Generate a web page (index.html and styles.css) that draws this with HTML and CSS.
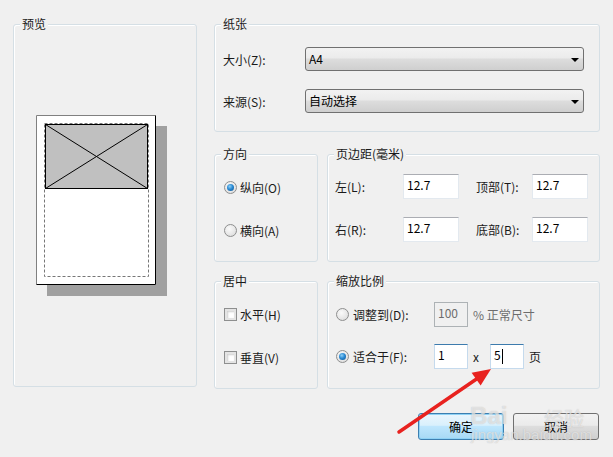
FILE: index.html
```html
<!DOCTYPE html>
<html lang="zh-CN">
<head>
<meta charset="utf-8">
<title>页面设置</title>
<link rel="stylesheet" href="styles.css">
</head>
<body>
<div class="dialog">
  <div class="top">
    <div class="group preview">
      <span class="legend">预览</span>
      <svg class="page" width="132" height="182" viewBox="0 0 132 182">
        <rect x="11" y="11" width="120" height="170" fill="#a0a0a0"/>
        <rect x="0" y="0" width="120" height="170" fill="#fff"/>
        <path d="M0.5 169.5 V0.5 H119.5" fill="none" stroke="#808080"/>
        <path d="M119.5 0.5 V169.5 H0.5" fill="none" stroke="#000"/>
        <rect x="8.5" y="8.5" width="104" height="153" fill="none" stroke="#777" stroke-dasharray="3 2"/>
        <rect x="9.5" y="9.5" width="102" height="64" fill="#c0c0c0" stroke="#000"/>
        <path d="M9.5 9.5 L111.5 73.5 M111.5 9.5 L9.5 73.5" stroke="#000" stroke-width="1"/>
      </svg>
    </div>
    <div class="right">
      <div class="group paper">
        <span class="legend">纸张</span>
        <div class="prow"><span class="plabel">大小(Z):</span><div class="combo">A4<i class="arrow"></i></div></div>
        <div class="prow"><span class="plabel">来源(S):</span><div class="combo">自动选择<i class="arrow"></i></div></div>
      </div>
      <div class="row row1">
        <div class="group small">
          <span class="legend">方向</span>
          <div class="opt"><span class="radio checked"></span>纵向(O)</div>
          <div class="opt"><span class="radio"></span>横向(A)</div>
        </div>
        <div class="group wide margins">
          <span class="legend">页边距(毫米)</span>
          <span class="mlabel">左(L):</span><div class="input">12.7</div><span></span><span class="mlabel">顶部(T):</span><div class="input">12.7</div>
          <span class="mlabel">右(R):</span><div class="input">12.7</div><span></span><span class="mlabel">底部(B):</span><div class="input">12.7</div>
        </div>
      </div>
      <div class="row row2">
        <div class="group small">
          <span class="legend">居中</span>
          <div class="opt"><span class="check"></span>水平(H)</div>
          <div class="opt"><span class="check"></span>垂直(V)</div>
        </div>
        <div class="group wide scale">
          <span class="legend">缩放比例</span>
          <div class="srow">
            <div class="sopt"><span class="radio"></span>调整到(D):</div>
            <div class="input num disabled">100</div>
            <span class="gray">% 正常尺寸</span>
          </div>
          <div class="srow">
            <div class="sopt"><span class="radio checked"></span>适合于(F):</div>
            <div class="input num focus">1</div>
            <span class="times">x</span>
            <div class="input num focus">5<i class="caret"></i></div>
            <span class="pg">页</span>
          </div>
        </div>
      </div>
    </div>
  </div>
  <div class="buttons">
    <button class="btn default">确定</button>
    <button class="btn">取消</button>
  </div>
</div>
<div class="watermark">
  <span class="wm-big">Bai</span><span class="wm-cn">经验</span>
  <span class="wm-url">jingyan.baidu.com</span>
</div>
<svg class="annot" width="613" height="457" viewBox="0 0 613 457">
  <line x1="399" y1="432" x2="478" y2="378" stroke="#e8221f" stroke-width="3.5" stroke-linecap="round"/>
  <polygon points="491,369 480.6,385.6 471.6,372.8" fill="#e8221f"/>
</svg>
</body>
</html>
```

FILE: styles.css
```css
html, body {
  margin: 0;
  padding: 0;
}
body {
  width: 613px;
  height: 457px;
  background: #f0f0f0;
  font-family: "Noto Sans CJK SC", "Open Sans", sans-serif;
  font-size: 12px;
  color: #1a1a1a;
  position: relative;
  overflow: hidden;
}
.dialog {
  padding: 24px 14px 0 13px;
}
.top {
  display: grid;
  grid-template-columns: 184px 386px;
  column-gap: 17px;
}
.group {
  position: relative;
  border: 1px solid #d5dfe5;
  border-radius: 3px;
  box-shadow: inset 1px 1px 0 #fff;
  box-sizing: border-box;
}
.legend {
  position: absolute;
  top: -10px;
  left: 6px;
  padding: 0 2px;
  background: #f0f0f0;
  line-height: 18px;
}
.preview {
  height: 363px;
}
.page {
  display: block;
  margin: 90px 0 0 22px;
}
.right {
  display: flex;
  flex-direction: column;
}
.paper {
  height: 108px;
  padding: 22px 15px 0 8px;
  display: flex;
  flex-direction: column;
  gap: 18px;
}
.prow {
  display: flex;
  align-items: center;
  height: 24px;
}
.plabel {
  width: 82px;
}
.combo {
  flex: 1;
  height: 24px;
  box-sizing: border-box;
  border: 1px solid #707070;
  border-radius: 3px;
  background: linear-gradient(#f2f2f2 0%, #ebebeb 45%, #dddddd 50%, #cfcfcf 100%);
  padding-left: 3px;
  line-height: 21px;
  position: relative;
  color: #000;
}
.arrow {
  position: absolute;
  right: 4px;
  top: 10px;
  width: 0;
  height: 0;
  border-left: 4px solid transparent;
  border-right: 4px solid transparent;
  border-top: 4px solid #000;
}
.row {
  display: flex;
  gap: 9px;
  height: 108px;
}
.row1 { margin-top: 22px; }
.row2 { margin-top: 19px; }
.small {
  width: 104px;
  padding: 22px 0 0 9px;
  display: flex;
  flex-direction: column;
  gap: 23px;
}
.wide {
  flex: 1;
}
.opt {
  display: flex;
  align-items: center;
  height: 20px;
}
.radio {
  width: 13px;
  height: 13px;
  box-sizing: border-box;
  border: 1px solid #8e8f8f;
  border-radius: 50%;
  background: radial-gradient(circle at 40% 35%, #fafafa 0%, #e6e6e6 60%, #d4d4d4 100%);
  margin-right: 3px;
  position: relative;
  flex: none;
}
.radio.checked::after {
  content: "";
  position: absolute;
  left: 2px;
  top: 2px;
  width: 7px;
  height: 7px;
  border-radius: 50%;
  background: radial-gradient(circle at 40% 35%, #8fd0f5 0%, #2a8ad4 45%, #0d4f8a 100%);
}
.check {
  width: 13px;
  height: 13px;
  box-sizing: border-box;
  border: 1px solid #8e8f8f;
  background: #fff;
  box-shadow: inset 0 0 0 2px #e4e4e4, inset 1px 1px 2px 2px #cfcfcf;
  margin-right: 3px;
  flex: none;
}
.margins {
  padding: 19px 0 0 7px;
  display: grid;
  grid-template-columns: 68px 56px 17px 56px 56px;
  grid-template-rows: 25px 25px;
  row-gap: 18px;
  align-content: start;
  align-items: center;
}
.input {
  height: 25px;
  box-sizing: border-box;
  border: 1px solid #e3e9ef;
  border-top-color: #abadb3;
  background: #fff;
  padding: 0 0 0 3px;
  line-height: 20px;
  color: #000;
  position: relative;
}
.scale {
  padding: 20px 0 0 8px;
  display: flex;
  flex-direction: column;
  gap: 17px;
}
.srow {
  display: flex;
  align-items: center;
  height: 25px;
}
.sopt {
  display: flex;
  align-items: center;
  width: 98px;
}
.sopt .radio {
  margin-right: 4px;
}
.num {
  width: 34px;
}
.disabled {
  background: #f0f0f0;
  border-color: #adb2b5;
  color: #6d6d6d;
}
.focus {
  border-color: #c5daed;
  border-top-color: #3d7bad;
}
.gray {
  color: #6d6d6d;
  margin-left: 5px;
}
.times {
  width: 22px;
  padding-left: 5px;
  box-sizing: border-box;
}
.caret {
  position: absolute;
  left: 11px;
  top: 4px;
  width: 1px;
  height: 15px;
  background: #000;
}
.pg {
  margin-left: 5px;
}
.buttons {
  display: flex;
  justify-content: flex-end;
  gap: 9px;
  margin-top: 24px;
}
.btn {
  width: 86px;
  height: 27px;
  box-sizing: border-box;
  border: 1px solid #707070;
  border-radius: 3px;
  background: linear-gradient(#f2f2f2 0%, #ebebeb 45%, #dddddd 50%, #cfcfcf 100%);
  font-family: inherit;
  font-size: 12px;
  color: #000;
  padding: 0;
}
.btn.default {
  border-color: #3c7fb1;
  background: linear-gradient(#eaf6fd 0%, #d9f0fc 45%, #bee6fd 50%, #a7d9f5 100%);
  box-shadow: inset 0 0 0 1px #8fd2f5;
}
.watermark {
  position: absolute;
  left: 468px;
  top: 394px;
  width: 140px;
  height: 50px;
  pointer-events: none;
  color: rgba(255, 255, 255, 0.55);
  text-shadow: 0 0 1px rgba(150, 150, 150, 0.6);
  font-family: "Liberation Sans", sans-serif;
}
.wm-big {
  position: absolute;
  left: 2px;
  top: 8px;
  font-size: 24px;
  font-weight: bold;
}
.wm-cn {
  position: absolute;
  left: 76px;
  top: 10px;
  font-size: 20px;
  font-family: "Noto Sans CJK SC", sans-serif;
}
.wm-url {
  position: absolute;
  left: 3px;
  top: 32px;
  font-size: 15px;
}
.annot {
  position: absolute;
  left: 0;
  top: 0;
  pointer-events: none;
}
```
